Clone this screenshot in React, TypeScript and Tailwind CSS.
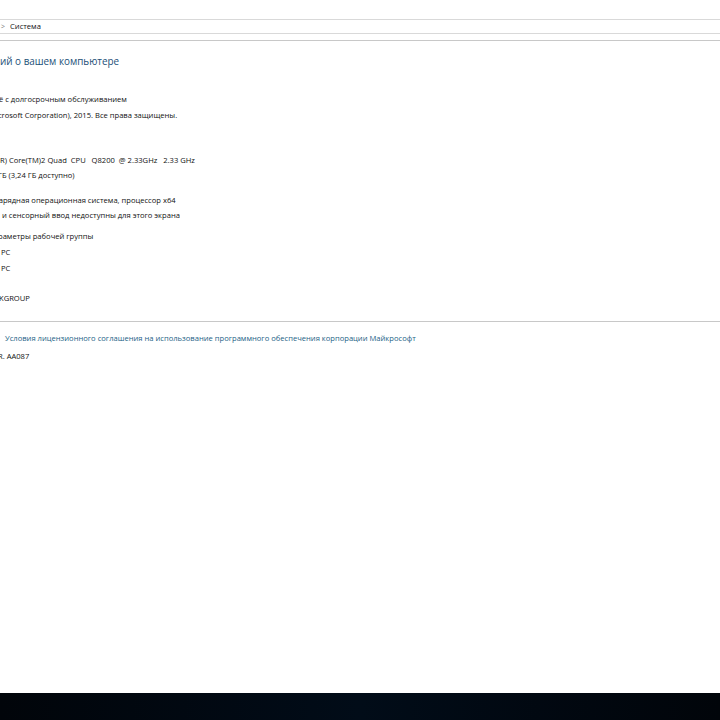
const rows: { text: string; cls: string }[] = [
  { text: "ё с долгосрочным обслуживанием", cls: "mt-[24px] -ml-[1px]" },
  { text: "icrosoft Corporation), 2015. Все права защищены.", cls: "mt-[4px] -ml-[4px]" },
  { text: "R) Core(TM)2 Quad  CPU   Q8200  @ 2.33GHz   2.33 GHz", cls: "mt-[33px]" },
  { text: "ГБ (3,24 ГБ доступно)", cls: "mt-[3px] -ml-[2px]" },
  { text: "зарядная операционная система, процессор x64", cls: "mt-[13px] -ml-[5px]" },
  { text: "и сенсорный ввод недоступны для этого экрана", cls: "mt-[3px] ml-[2px]" },
  { text: "раметры рабочей группы", cls: "mt-[9px] -ml-[2px]" },
  { text: "PC", cls: "mt-[4px] ml-[1px]" },
  { text: "PC", cls: "mt-[4px] ml-[1px]" },
  { text: "KGROUP", cls: "mt-[18px] -ml-[1px]" },
];

export default function App() {
  return (
    <div className="flex h-[720px] w-[720px] flex-col overflow-hidden bg-white font-['Open_Sans','Liberation_Sans',sans-serif] text-[7.6px] text-[#111111]">
      <div className="mt-[19px] flex h-[15px] items-center gap-[4px] border-y border-[#d9d9d9] pl-[1px] leading-none">
        <span className="text-[7px] text-[#777777]">&gt;</span>
        <span className="ml-[1px]">Система</span>
      </div>
      <div className="mt-[6px] h-px bg-[#c8c8c8]" />
      <h1 className="mt-[13px] h-[15px] text-[9.9px] leading-[15px] font-normal whitespace-nowrap text-[#1c4f78]">
        ий о вашем компьютере
      </h1>
      {rows.map((r, i) => (
        <div key={i} className={`${r.cls} h-[12px] leading-[12px] whitespace-pre`}>
          {r.text}
        </div>
      ))}
      <div className="mt-[17px] h-px bg-[#c8c8c8]" />
      <div className="mt-[10px] h-[12px] pl-[5px] leading-[12px] whitespace-nowrap text-[#1c5f86]">
        Условия лицензионного соглашения на использование программного обеспечения корпорации Майкрософт
      </div>
      <div className="mt-[6px] -ml-[2px] h-[12px] leading-[12px] whitespace-nowrap">R. AA087</div>
      <div className="mt-auto h-[27px] bg-gradient-to-r from-[#01050a] via-[#010c18] to-[#01050a]" />
    </div>
  );
}
